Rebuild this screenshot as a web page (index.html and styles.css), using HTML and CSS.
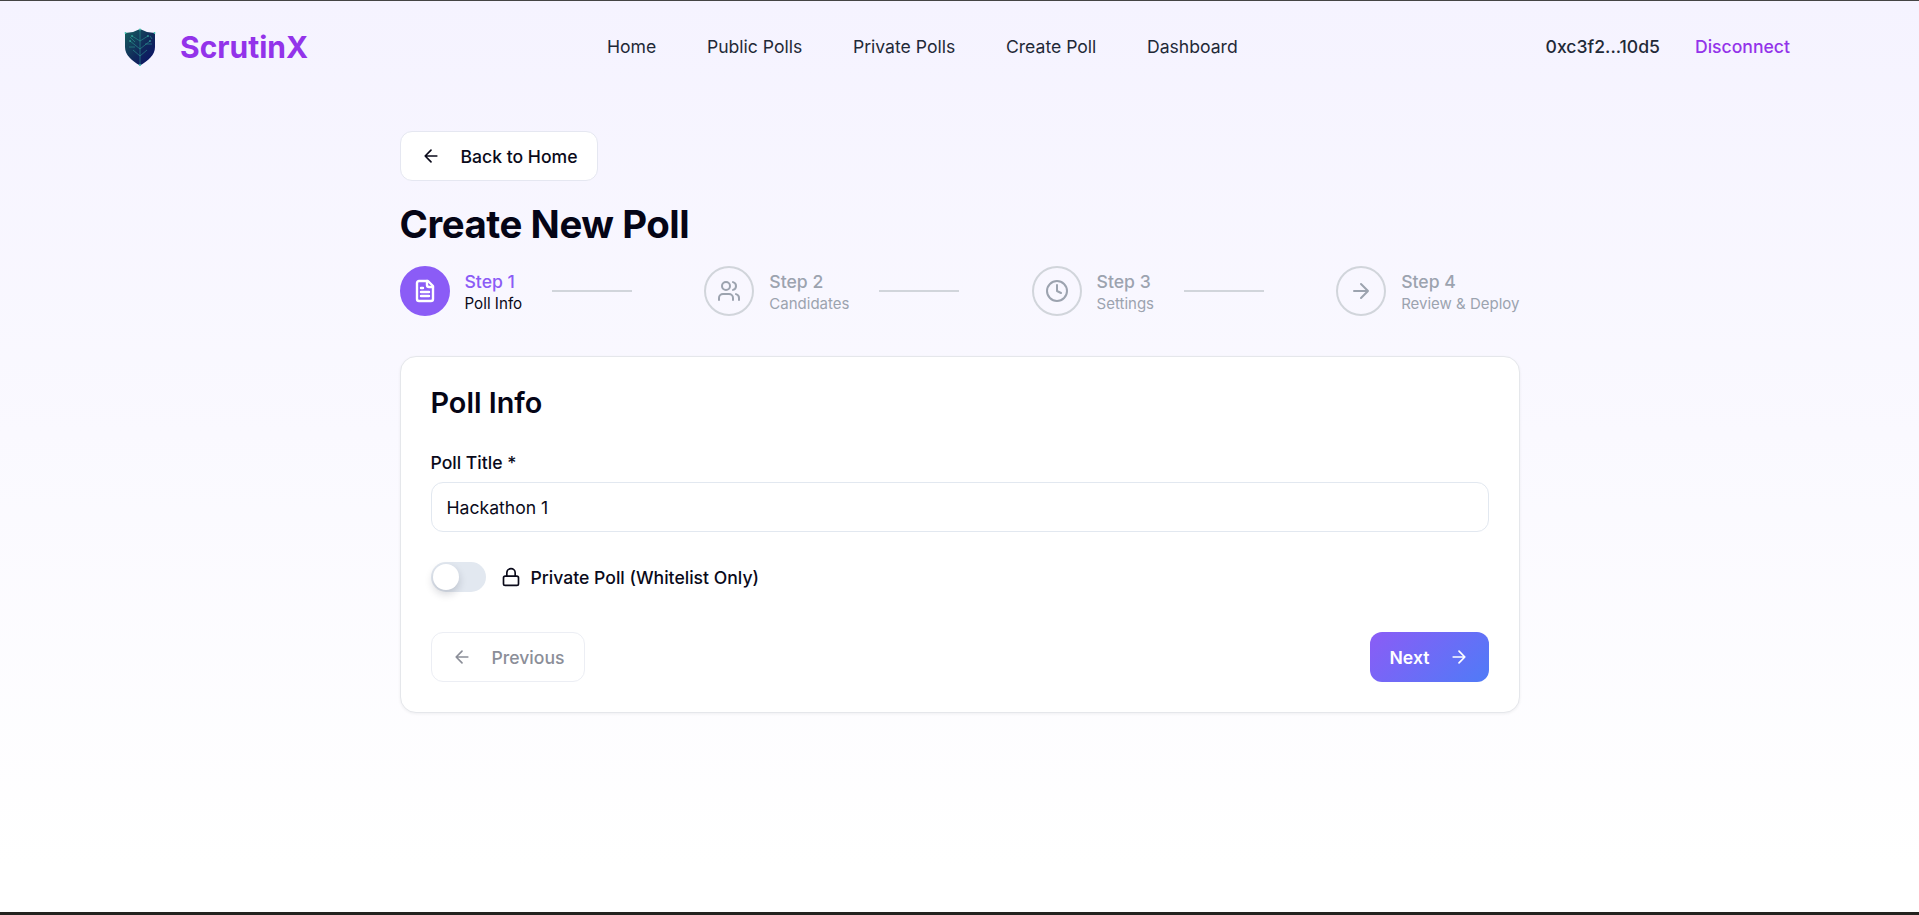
FILE: index.html
```html
<!DOCTYPE html>
<html lang="en">
<head>
<meta charset="utf-8">
<title>ScrutinX - Create New Poll</title>
<link rel="stylesheet" href="styles.css">
</head>
<body>
<div class="page">
  <nav class="nav">
    <a class="brand">
      <svg class="shield" viewBox="0 0 32 38">
        <defs><linearGradient id="sg" x1="0" y1="0" x2="1" y2="1"><stop offset="0" stop-color="#17605f"/><stop offset=".55" stop-color="#10285a"/><stop offset="1" stop-color="#0a0f6a"/></linearGradient></defs>
        <path d="M16 1 L23 4 L31 5 V19 C31 27 24 33 16 37.5 C8 33 1 27 1 19 V5 L9 4 Z" fill="url(#sg)"/>
        <g fill="none" stroke="#2fa59a" stroke-width=".7" opacity=".75">
          <path d="M16 2V36M16 13L24 8M16 21L26 13M16 28L23 22M16 13L8 8M16 21L6 13M16 28L9 22M21 16H28M5 19H11M6 9L11 14M26 8L28 11"/>
        </g>
        <g fill="#3fc4b0"><circle cx="16" cy="1.5" r="1"/><circle cx="1.5" cy="5" r=".9"/><circle cx="30.5" cy="5" r=".9"/><circle cx="8" cy="8" r=".8"/><circle cx="24" cy="8" r=".8"/><circle cx="6" cy="13" r=".8"/><circle cx="26" cy="13" r=".8"/><circle cx="16" cy="37" r="1"/></g>
      </svg>
      <span class="brand-name">ScrutinX</span>
    </a>
    <div class="nav-links">
      <a>Home</a><a>Public Polls</a><a>Private Polls</a><a>Create Poll</a><a>Dashboard</a>
    </div>
    <div class="wallet">
      <span>0xc3f2...10d5</span>
      <a class="disconnect">Disconnect</a>
    </div>
  </nav>

  <main class="main">
    <button class="btn back">
      <svg class="ico" viewBox="0 0 24 24"><path d="m12 19-7-7 7-7M19 12H5"/></svg>
      Back to Home
    </button>
    <h1 class="title">Create New Poll</h1>

    <div class="stepper">
      <div class="step active">
        <div class="circle"><svg class="ico" viewBox="0 0 24 24"><path d="M15 2H6a2 2 0 0 0-2 2v16a2 2 0 0 0 2 2h12a2 2 0 0 0 2-2V7Z"/><path d="M14 2v4a2 2 0 0 0 2 2h4M10 9H8M16 13H8M16 17H8"/></svg></div>
        <div class="step-text"><div class="step-num">Step 1</div><div class="step-name">Poll Info</div></div>
        <div class="line"></div>
      </div>
      <div class="step">
        <div class="circle"><svg class="ico" viewBox="0 0 24 24"><path d="M16 21v-2a4 4 0 0 0-4-4H6a4 4 0 0 0-4 4v2"/><circle cx="9" cy="7" r="4"/><path d="M22 21v-2a4 4 0 0 0-3-3.87M16 3.13a4 4 0 0 1 0 7.75"/></svg></div>
        <div class="step-text"><div class="step-num">Step 2</div><div class="step-name">Candidates</div></div>
        <div class="line"></div>
      </div>
      <div class="step">
        <div class="circle"><svg class="ico" viewBox="0 0 24 24"><circle cx="12" cy="12" r="10"/><path d="M12 6v6l4 2"/></svg></div>
        <div class="step-text"><div class="step-num">Step 3</div><div class="step-name">Settings</div></div>
        <div class="line"></div>
      </div>
      <div class="step">
        <div class="circle"><svg class="ico" viewBox="0 0 24 24"><path d="M5 12h14M12 5l7 7-7 7"/></svg></div>
        <div class="step-text"><div class="step-num">Step 4</div><div class="step-name">Review &amp; Deploy</div></div>
      </div>
    </div>

    <section class="card">
      <h2 class="card-title">Poll Info</h2>
      <label class="field-label" for="pt">Poll Title *</label>
      <input class="input" id="pt" type="text" value="Hackathon 1">
      <div class="private-row">
        <span class="toggle"><span class="knob"></span></span>
        <svg class="ico lock" viewBox="0 0 24 24"><rect x="3" y="11" width="18" height="11" rx="2"/><path d="M7 11V7a5 5 0 0 1 10 0v4"/></svg>
        <span>Private Poll (Whitelist Only)</span>
      </div>
      <div class="actions">
        <button class="btn prev">
          <svg class="ico" viewBox="0 0 24 24"><path d="m12 19-7-7 7-7M19 12H5"/></svg>
          Previous
        </button>
        <button class="btn next">
          Next
          <svg class="ico" viewBox="0 0 24 24"><path d="M5 12h14M12 5l7 7-7 7"/></svg>
        </button>
      </div>
    </section>
  </main>
</div>
</body>
</html>
```
FILE: styles.css
```css
* { box-sizing: border-box; }
html, body { margin: 0; height: 100%; }
body { font-family: Inter, "Liberation Sans", sans-serif; color: #0a0a1a; overflow: hidden; }
.page {
  height: 915px;
  border-top: 1px solid #444;
  border-bottom: 3px solid #23231f;
  background: linear-gradient(180deg, #f5f3ff 0%, #ffffff 95%);
}
.nav {
  height: 91px;
  padding: 0 129px 0 124px;
  display: flex;
  align-items: center;
  justify-content: space-between;
}
.brand { display: flex; align-items: center; gap: 24px; padding-top: 1px; }
.shield { width: 32px; height: 38px; display: block; }
.brand-name { font-size: 30px; font-weight: 700; color: #9333ea; }
.nav-links { display: flex; gap: 50.6px; font-size: 17.6px; font-weight: 400; color: #1f2937; margin-right: 9px; }
.wallet { display: flex; gap: 35px; font-size: 17.6px; font-weight: 500; color: #1f2937; }
.disconnect { color: #9333ea; }

.main { width: 1120px; margin: 0 auto; padding-top: 39px; }
.ico { width: 20px; height: 20px; fill: none; stroke: currentColor; stroke-width: 2; stroke-linecap: round; stroke-linejoin: round; flex: none; }

.btn {
  height: 50px;
  display: inline-flex;
  align-items: center;
  gap: 20px;
  font-family: inherit;
  font-size: 17.6px;
  font-weight: 500;
  border-radius: 12px;
  padding: 0 20px;
  white-space: nowrap;
}
.back { width: 198px; background: #fff; border: 1px solid #e5e7f1; color: #0a0a1a; }
.title { margin: 20px 0 0; font-size: 38.4px; line-height: 46px; font-weight: 700; letter-spacing: -.45px; color: #050516; }

.stepper { display: flex; justify-content: space-between; margin-top: 19px; }
.step { display: flex; align-items: center; gap: 15px; }
.circle {
  width: 50px; height: 50px; border-radius: 50%;
  border: 2px solid #d1d5db;
  display: flex; align-items: center; justify-content: center;
  color: #9ca3af;
}
.circle .ico { width: 24px; height: 24px; }
.active .circle { background: #8b5cf6; border-color: #8b5cf6; color: #fff; }
.active .circle .ico { stroke-width: 2.4; }
.step-text { padding-top: 2px; }
.step-num { font-size: 17.6px; line-height: 22px; font-weight: 500; color: #9ca3af; }
.step-name { font-size: 15px; line-height: 21px; color: #9ca3af; }
.active .step-num { color: #8b5cf6; }
.active .step-name { font-size: 15.2px; color: #0a0a1a; }
.line { width: 80px; height: 2px; background: #d1d5db; margin-left: 15px; }

.card {
  margin-top: 40px;
  height: 357px;
  background: #fff;
  border: 1px solid #e5e7eb;
  border-radius: 16px;
  padding: 30px;
  box-shadow: 0 1px 3px rgba(15, 23, 42, .06);
}
.card-title { margin: 0; font-size: 28.8px; line-height: 32px; font-weight: 600; color: #050516; }
.field-label { display: block; margin-top: 32px; font-size: 17.6px; line-height: 24px; font-weight: 500; color: #0a0a1a; }
.input {
  display: block; width: 100%; height: 50px; margin-top: 7px;
  border: 1px solid #e2e8f0; border-radius: 12px; padding: 0 15px;
  font-family: inherit; font-size: 17.6px; color: #0a0a1a; background: #fff; outline: none;
}
.private-row { display: flex; align-items: center; margin-top: 30px; height: 30px; font-size: 17.6px; font-weight: 500; color: #0a0a1a; }
.toggle { position: relative; width: 55px; height: 30px; border-radius: 15px; background: #e2e8f0; display: block; margin-right: 15px; }
.knob { position: absolute; left: 2px; top: 2px; width: 26px; height: 26px; border-radius: 50%; background: #fff; box-shadow: 0 4px 8px rgba(15, 23, 42, .18); }
.lock { margin-right: 10px; }
.actions { display: flex; justify-content: space-between; margin-top: 40px; }
.prev { background: #fff; border: 1px solid #eceef4; color: #8b8e98; width: 154px; }
.next { background: linear-gradient(135deg, #8b5cf6, #4f7bf7); border: 0; color: #fff; width: 119px; font-weight: 600; }
```
